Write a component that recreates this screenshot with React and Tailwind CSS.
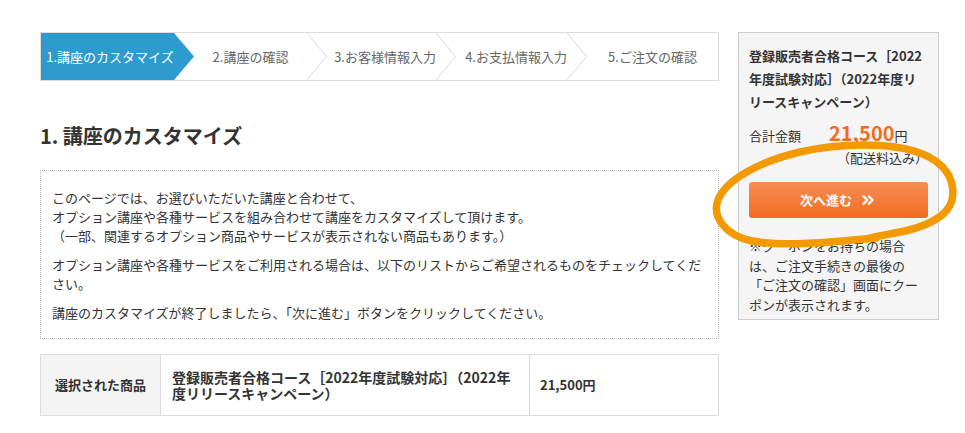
import { ChevronsRight } from 'lucide-react';

const STEPS = [
  { label: '2.講座の確認', width: 'w-[133px]', align: 'justify-center pl-[20px]' },
  { label: '3.お客様情報入力', width: 'w-[129px]', align: 'justify-end' },
  { label: '4.お支払情報入力', width: 'w-[131px]', align: 'justify-end' },
];

function Chevron() {
  return (
    <svg className="absolute left-full top-0 z-10 h-full w-[21px]" viewBox="0 0 21 47" preserveAspectRatio="none">
      <polyline points="0,0 19.5,23.5 0,47" fill="none" stroke="#d9d9d9" strokeWidth="1" />
    </svg>
  );
}

function Stepper() {
  return (
    <div className="flex h-[49px] border border-[#dddddd] text-[13px] text-[#666]">
      <div className="relative z-20 flex w-[133px] shrink-0 items-center justify-center whitespace-nowrap bg-[#2d9bcd] pl-[5px] text-white">
        1.講座のカスタマイズ
        <svg className="absolute left-full top-0 h-full w-[20px]" viewBox="0 0 20 47" preserveAspectRatio="none">
          <path d="M0 0 L20 23.5 L0 47 Z" fill="#2d9bcd" />
        </svg>
      </div>
      {STEPS.map((s) => (
        <div key={s.label} className={`relative flex shrink-0 ${s.width} ${s.align} items-center whitespace-nowrap`}>
          {s.label}
          <Chevron />
        </div>
      ))}
      <div className="flex flex-1 items-center justify-center whitespace-nowrap pl-[20px]">5.ご注文の確認</div>
    </div>
  );
}

function Annotation() {
  // hand-drawn marker loop around the next button
  return (
    <svg className="pointer-events-none absolute left-0 top-0 h-[433px] w-[965px]" viewBox="0 0 965 433">
      <path
        d="M876 238 C830 242 785 247 752 241 C724 235 712 216 718 200 C726 180 758 162 800 152 C840 143 890 142 920 153 C945 162 956 180 952 200 C948 216 930 225 905 231 C890 234 878 236 866 239"
        fill="none"
        stroke="#f29a00"
        strokeWidth="7.5"
        strokeLinecap="round"
        strokeLinejoin="round"
      />
    </svg>
  );
}

export default function App() {
  return (
    <div className="relative h-[433px] w-[965px] overflow-hidden bg-white pl-[40px] pt-[32px] font-['Noto_Sans_CJK_JP','Noto_Sans',sans-serif] text-[#333]">
      <div className="flex gap-[19px]">
        <main className="w-[679px]">
          <Stepper />

          <h1 className="mt-[41px] text-[20px] font-bold leading-[28px] text-[#333]">1. 講座のカスタマイズ</h1>

          <div className="mt-[20px] border border-dotted border-[#bbbbbb] px-[11px] pb-[16px] pt-[17px] text-[13px] leading-[19px]">
            <p>
              このページでは、お選びいただいた講座と合わせて、
              <br />
              オプション講座や各種サービスを組み合わせて講座をカスタマイズして頂けます。
              <br />
              （一部、関連するオプション商品やサービスが表示されない商品もあります。）
            </p>
            <p className="mt-[10px]">
              オプション講座や各種サービスをご利用される場合は、以下のリストからご希望されるものをチェックしてください。
            </p>
            <p className="mt-[10px]">講座のカスタマイズが終了しましたら、「次に進む」ボタンをクリックしてください。</p>
          </div>

          <div className="mt-[15px] flex h-[62px] border border-[#dddddd]">
            <div className="flex w-[120px] items-center justify-center border-r border-[#dddddd] bg-[#f4f4f4] text-[13px] font-bold">
              選択された商品
            </div>
            <div className="flex w-[369px] items-center border-r border-[#dddddd] pl-[11px] pr-[11px] text-[14px] font-bold leading-[16px]">
              登録販売者合格コース［2022年度試験対応］（2022年度リリースキャンペーン）
            </div>
            <div className="flex flex-1 items-center pl-[10px] text-[13px] font-bold">21,500円</div>
          </div>
        </main>

        <aside className="h-[288px] w-[201px] border border-[#cccccc] bg-[#f5f5f5] px-[10px] pt-[11px] pb-[5px]">
          <p className="text-[13px] font-bold leading-[23px]">登録販売者合格コース［2022年度試験対応］（2022年度リリースキャンペーン）</p>
          <div className="mt-[5px] flex h-[24px] items-baseline text-[13px]">
            <span>合計金額</span>
            <span className="ml-[28px] text-[20px] font-bold text-[#f26b21]">21,500</span>
            <span>円</span>
          </div>
          <p className="mt-[6px] text-right text-[13px] leading-[19px]">（配送料込み）</p>
          <button className="mt-[15px] flex h-[36px] w-full items-center justify-center gap-[7px] rounded-[3px] bg-linear-to-b from-[#f58d52] to-[#f36b1c] text-[13px] font-bold text-white">
            次へ進む
            <ChevronsRight className="h-[18px] w-[18px]" strokeWidth={3.2} />
          </button>
          <p className="mt-[18px] text-[13px] leading-[19.5px]">
            ※クーポンをお持ちの場合は、ご注文手続きの最後の「ご注文の確認」画面にクーポンが表示されます。
          </p>
        </aside>
      </div>
      <Annotation />
    </div>
  );
}
